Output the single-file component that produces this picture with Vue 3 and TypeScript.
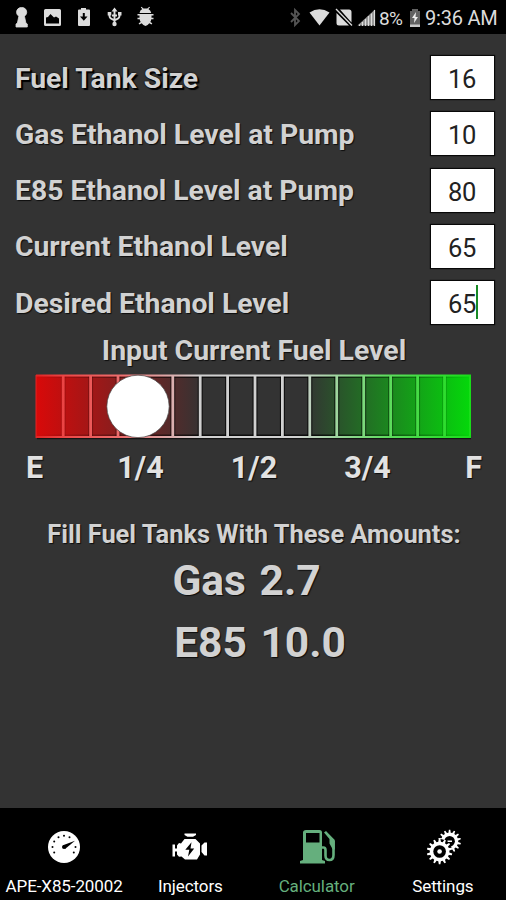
<script setup lang="ts">
import { ref } from 'vue'

interface Field { label: string; value: string; kind?: string }

const fields = ref<Field[]>([
  { label: 'Fuel Tank Size', value: '16', kind: 'heavy' },
  { label: 'Gas Ethanol Level at Pump', value: '10' },
  { label: 'E85 Ethanol Level at Pump', value: '80' },
  { label: 'Current Ethanol Level', value: '65' },
  { label: 'Desired Ethanol Level', value: '65', kind: 'focused' },
])

const dividers = Array.from({ length: 15 }, (_, i) => (i < 10 ? 27.500 + 27.4 * i : 274.1 + 26.95 * (i - 9)))

function gear(cx: number, cy: number, teeth: number, outer: number, inner: number): string {
  const pts: string[] = []
  const step = (Math.PI * 2) / teeth
  for (let i = 0; i < teeth; i++) {
    const a = i * step - Math.PI / 2
    for (const [f, r] of [[-0.3, inner], [-0.14, outer], [0.14, outer], [0.3, inner]]) {
      pts.push(`${(cx + r * Math.cos(a + f * step)).toFixed(2)},${(cy + r * Math.sin(a + f * step)).toFixed(2)}`)
    }
  }
  return pts.join(' ')
}
const smallGear = gear(26.6, 14.2, 14, 11.4, 8.6)
const bigGear = gear(16.6, 24.5, 14, 12.8, 9.8)
</script>

<template>
  <div class="screen">
    <header class="status">
      <svg class="status-icons" viewBox="0 0 170 34" width="170" height="34" fill="#dcdcdc">
        <path d="M21.700 7.500c3 0 5 2 5 4.700 0 1.500-.7 2.500-1.500 3.300l-.7 1 1.400 6.500 1.400 1v3H16v-3l1.400-1 1.400-6.500-.7-1c-.9-.8-1.500-1.800-1.500-3.300 0-2.700 2-4.700 5-4.700z" stroke="#dcdcdc" stroke-width=".8" />
        <path fill-rule="evenodd" d="M45.500 9h14a1.500 1.500 0 0 1 1.500 1.500v14a1.500 1.500 0 0 1-1.500 1.500h-14a1.500 1.500 0 0 1-1.500-1.500v-14A1.500 1.500 0 0 1 45.500 9zM46 23.500h13v-5l-3-2-2 1-3.500-3.500-2.500 3-2 .5z" />
        <path fill-rule="evenodd" d="M81 8h5v1.500h3a1 1 0 0 1 1 1V25a1 1 0 0 1-1 1H79a1 1 0 0 1-1-1V10.500a1 1 0 0 1 1-1h2zm1.800 5v3.500H80l3.800 4.200 3.700-4.200h-2.700V13z" />
        <path d="M114.500 9v14M109.500 13v3q0 2.500 5 4.300M119.500 12v4q0 2.500-5 4.300M112 15.500h5" fill="none" stroke="#dcdcdc" stroke-width="1.900" />
        <path d="M111.500 11.500l3-4 3 4zM107.700 12h3.600v3.500h-3.600zM118 12h3.500v3.500H118z" /><circle cx="114.500" cy="24" r="2.200" />
        <path d="M139.500 13q.5-2.800 2.800-3.900L140.800 7.500l.7-.7 2 1.800h3.800l2-1.800.7.7-1.600 1.600q2.500 1.300 2.800 3.900zM137.500 14h16v1.500h-2v2.200h2v1.600h-2.200q-.3 1.500-1 2.600l2 1.300-.8 1.300-2.200-1.200q-1.500 2.200-3.800 2.700-2.300-.5-3.800-2.700l-2.300 1.200-.8-1.300 2.100-1.300q-.8-1.100-1-2.600h-2.200v-1.600h2v-2.200h-2z" />
      </svg>
      <div class="status-right">
        <svg viewBox="285 0 91 34" width="91" height="34" fill="#dcdcdc">
          <path d="M291 13l8 8-4 4V10l4 4-8 8" fill="none" stroke="#555" stroke-width="1.800" />
          <path d="M309.500 12.500q10-6.500 20 0L319.500 25.500z" />
          <path d="M340 9.500h9q2.500 0 2.500 2.500V22.500zM336.500 13L349 25.500h-10q-2.500 0-2.500-2.500z" />
          <path d="M336 9l16 16.500" stroke="#dcdcdc" stroke-width="1.300" />
          <path d="M357.500 25.500L375 9.500v16z" fill="#929292" />
          <path d="M359.500 24.500v1.500M362.500 22v4M365.500 19v7M368.500 16v10M371.500 13.500v12.500M374.500 10v16" stroke="#dcdcdc" stroke-width="1.200" />
        </svg>
        <span class="percent">8%</span>
        <svg class="battery" viewBox="0 0 12 20" width="12" height="20">
          <path d="M3 1h6v2h2v16H1V3h2z" fill="#626262" /><path d="M1 16.500h10V19H1z" fill="#c8c8c8" />
          <path d="M7 4l-4 6h2.500L5 15l4-6H6.500z" fill="#eee" />
        </svg>
        <span class="clock">9:36 AM</span>
      </div>
    </header>

    <main class="content">
      <form class="fields">
        <label v-for="f in fields" :key="f.label" class="field" :class="f.kind">
          <span class="field-label">{{ f.label }}</span>
          <span class="box"><span>{{ f.value }}</span><i v-if="f.kind === 'focused'" class="caret"></i></span>
        </label>
      </form>

      <h2 class="level-title">Input Current Fuel Level</h2>
      <svg class="gauge" viewBox="0 0 440 68" width="440" height="68">
        <defs>
          <linearGradient id="fill" gradientUnits="userSpaceOnUse" x1="2" y1="0" x2="437" y2="0">
            <stop offset="0" stop-color="#d90909" /><stop offset=".385" stop-color="#333" />
            <stop offset=".62" stop-color="#333" /><stop offset="1" stop-color="#04d90a" />
          </linearGradient>
          <linearGradient id="line" gradientUnits="userSpaceOnUse" x1="2" y1="0" x2="437" y2="0">
            <stop offset="0" stop-color="#e12525" /><stop offset=".07" stop-color="#ec4848" /><stop offset=".2" stop-color="#ec7070" /><stop offset=".375" stop-color="#d0d0d0" />
            <stop offset=".6" stop-color="#d0d0d0" /><stop offset=".8" stop-color="#62dc62" /><stop offset="1" stop-color="#18dd18" />
          </linearGradient>
          <linearGradient id="shade" gradientUnits="userSpaceOnUse" x1="2" y1="0" x2="437" y2="0">
            <stop offset="0" stop-color="#000" stop-opacity="0" /><stop offset=".4" stop-color="#000" stop-opacity=".75" />
            <stop offset=".65" stop-color="#000" stop-opacity=".75" /><stop offset="1" stop-color="#000" stop-opacity="0" />
          </linearGradient>
        </defs>
        <rect x="2" y="3" width="435" height="63" fill="url(#fill)" />
        <g fill="url(#shade)">
          <rect x="4" y="4.500" width="431" height="1.500" />
          <rect x="4" y="62.500" width="431" height="1.500" />
          <rect v-for="x in dividers" :key="x" :x="x - 0.8" y="4" width="5" height="60" />
        </g>
        <path d="M3 66.700H437" stroke="#000" stroke-opacity=".6" stroke-width="1.300" />
        <g fill="url(#line)">
          <rect x="2" y="2.500" width="435" height="2" />
          <rect x="2" y="64" width="435" height="2" />
          <rect x="1.500" y="3" width="1" height="63" />
          <rect v-for="x in dividers" :key="x" :x="x + 0.300" y="3" width="2.800" height="62" />
          <rect x="435" y="3" width="2" height="63" />
        </g>
        <circle cx="104" cy="34.400" r="31.200" fill="#fff" stroke="#444" stroke-width=".7" />
      </svg>
      <div class="scale">
        <span>E</span><span>1/4</span><span>1/2</span><span>3/4</span><span>F</span>
      </div>

      <section class="results">
        <h2>Fill Fuel Tanks With These Amounts:</h2>
        <p class="gas">Gas 2.7</p>
        <p class="e85">E85 10.0</p>
      </section>
    </main>

    <nav class="tabs">
      <a class="tab">
        <svg viewBox="0 0 40 40" width="40" height="40">
          <circle cx="20" cy="20" r="16" fill="#fff" />
          <g fill="#000">
            <circle cx="8.500" cy="20" r="1" /><circle cx="10.200" cy="14.500" r="1" /><circle cx="14.500" cy="10.200" r="1" />
            <circle cx="20" cy="8.700" r="1" /><circle cx="25.500" cy="10.200" r="1" /><circle cx="31.500" cy="20" r="1" />
            <circle cx="10.200" cy="25.500" r="1" /><circle cx="29.800" cy="25.500" r="1" />
            <circle cx="20" cy="20" r="2" /><path d="M19 18.300L31 13.800 21 22z" />
          </g>
        </svg>
        <span>APE-X85-20002</span>
      </a>
      <a class="tab">
        <svg viewBox="0 0 40 40" width="40" height="40" fill="#fff">
          <path d="M14.500 6.500h11.500v1.500L23 9.700h-5.500L14.500 8zM14.500 12h11l4.500 4.500v11L27 32.500H15L11.500 29.500 9 29.800l-2-2.300v-9L9 16l2 .5zM2.500 17.500H5v12H2.500zM31.500 18.500l3-3H37v13h-2.500l-3-3.500z" />
          <path d="M4.500 21.500H8v3H4.500z" />
          <path d="M21.500 15.200l-6.200 7.600h4L18 29.500l6.200-8h-3.700z" fill="#000" />
        </svg>
        <span>Injectors</span>
      </a>
      <a class="tab active">
        <svg viewBox="0 0 40 40" width="40" height="40">
          <path fill="#65af7d" fill-rule="evenodd" d="M9 3h13.500q2.500 0 2.500 2.500V33l3 1v2.500H3V34l3-1V5.500Q6 3 9 3zm0 3v9.500h13.500V6z" />
          <path d="M24.500 20.500h2q2 0 2 2.500v5.500q0 4.500 4 4.500t4-5V14" fill="none" stroke="#65af7d" stroke-width="2.600" />
          <path d="M27 5.500l2-1.500 8.800 9v9.500L35.500 22l-3-5.500V12z" fill="#65af7d" />
        </svg>
        <span>Calculator</span>
      </a>
      <a class="tab">
        <svg viewBox="0 0 40 40" width="40" height="40" fill="#fff">
          <polygon :points="smallGear" />
          <circle cx="26.600" cy="14.200" r="5.300" fill="#000" /><path d="M24.500 13.500h4.500V15h-4.500z" />
          <circle cx="16.600" cy="24.500" r="12.500" fill="#000" />
          <polygon :points="bigGear" /><circle cx="16.600" cy="24.500" r="6.300" fill="#000" />
          <circle cx="16.600" cy="24.500" r="2.300" />
        </svg>
        <span>Settings</span>
      </a>
    </nav>
  </div>
</template>

<style>
body { margin: 0; background: #000; }
</style>

<style scoped>
.screen { width: 506px; height: 900px; display: flex; flex-direction: column; overflow: hidden; background: #333; color: #d2d2d2; font-family: Roboto, sans-serif; }
.status { height: 34px; flex: none; display: flex; justify-content: space-between; background: #000; color: #dcdcdc; }
.status svg { display: block; flex: none; }
.status-right { display: flex; align-items: center; width: 221px; }
.percent { width: 30px; margin-left: 3px; font-size: 19px; letter-spacing: -.6px; padding-top: 2px; box-sizing: border-box; }
.status .battery { margin-top: 1px; }
.clock { margin-left: 4px; padding-top: 2px; font-size: 20px; letter-spacing: -.2px; white-space: nowrap; }
.content { flex: 1; display: flex; flex-direction: column; text-shadow: 1px 1px 1px rgba(0, 0, 0, .75); }
.fields { padding: 21.500px 12.500px 0 15px; display: flex; flex-direction: column; gap: 12.300px; }
.field { height: 44px; display: flex; justify-content: space-between; align-items: center; }
.field-label { font-size: 28.300px; font-weight: 700; line-height: 44px; padding-top: 2px; white-space: nowrap; }
.heavy .field-label { text-shadow: 2px 2px 1px #000, 0 0 2px #000; }
.box { width: 63px; height: 43px; display: flex; align-items: center; justify-content: center; background: #fff; color: #222; font-size: 25.500px; box-sizing: border-box; box-shadow: 0 0 1px 1px #080808; position: relative; text-shadow: none; letter-spacing: -.3px; }
.box span { padding-top: 3px; }
.caret { position: absolute; left: 45px; top: 4px; width: 2.500px; height: 34px; background: #188a25; }
.level-title { margin: 9.500px 0 0; font-size: 28.400px; line-height: 34px; text-align: center; white-space: nowrap; padding-left: 2px; }
.gauge { display: block; margin: 4px 0 0 34px; flex: none; }
.scale { margin: 9px 0 0 -23px; width: 554px; display: grid; grid-template-columns: 115px 97px 130px 97px 115px; text-align: center; font-size: 30.500px; font-weight: 700; line-height: 38px; color: #e2e2e2; }
.results { text-align: center; }
.results h2 { font-size: 25.400px; line-height: 32px; margin: 31px 0 0; padding-left: 2px; white-space: nowrap; }
.results p { font-size: 42.500px; line-height: 50px; font-weight: 700; margin: 6px 0 0; word-spacing: 3px; white-space: nowrap; }
.results .gas { padding-right: 13px; }
.results .e85 { margin-top: 12px; padding-left: 14px; }
.tabs { height: 92px; flex: none; display: grid; grid-template-columns: repeat(4, 1fr); padding-left: 1px; background: #000; color: #fff; }
.tab { display: flex; flex-direction: column; align-items: center; gap: 9px; padding-top: 19px; box-sizing: border-box; font-size: 17px; letter-spacing: -.1px; line-height: 20px; white-space: nowrap; }
.tab svg { display: block; flex: none; }
.tab.active { color: #65af7d; }
</style>
